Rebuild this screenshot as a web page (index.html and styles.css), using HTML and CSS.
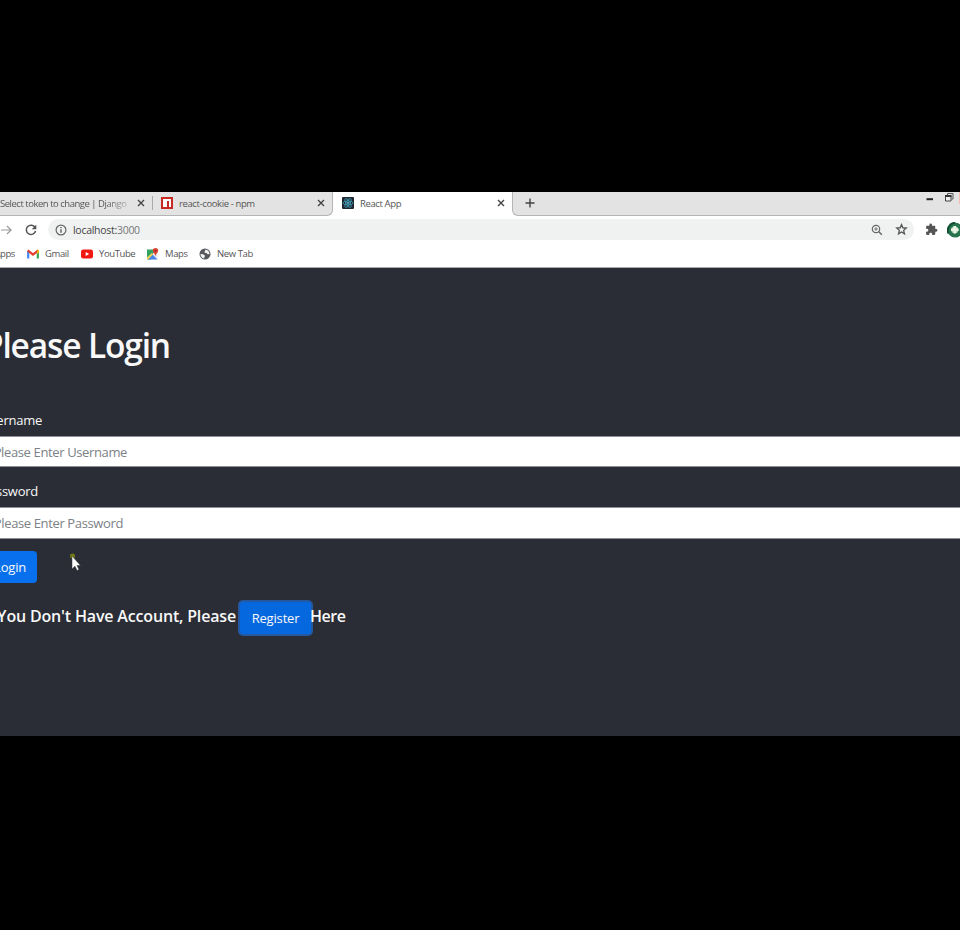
FILE: index.html
```html
<!DOCTYPE html>
<html lang="en">
<head>
<meta charset="utf-8">
<title>React App</title>
<link rel="stylesheet" href="styles.css">
</head>
<body>
<div class="browser">
  <div class="tabs">
    <div class="tab tab-django"><span class="title fade">Select token to change | Django</span><svg class="x" viewBox="0 0 8 8"><path d="M1 1l6 6M7 1L1 7"/></svg></div>
    <div class="tab tab-npm"><svg class="fav" viewBox="0 0 12 12"><path fill="#c62a22" d="M0 0h12v12H0z"/><path fill="#fff" d="M2 2h8v8H8V4H6v6H2z"/></svg><span class="title">react-cookie - npm</span><svg class="x" viewBox="0 0 8 8"><path d="M1 1l6 6M7 1L1 7"/></svg></div>
    <div class="tab tab-react"><svg class="fav" viewBox="0 0 12 12"><rect width="12" height="12" rx="1" fill="#20262d"/><g fill="none" stroke="#3f9db8" stroke-width=".8"><ellipse cx="6" cy="6" rx="5" ry="2"/><ellipse cx="6" cy="6" rx="5" ry="2" transform="rotate(60 6 6)"/><ellipse cx="6" cy="6" rx="5" ry="2" transform="rotate(120 6 6)"/></g><circle cx="6" cy="6" r="1" fill="#5cc4dc"/></svg><span class="title">React App</span><svg class="x" viewBox="0 0 8 8"><path d="M1 1l6 6M7 1L1 7"/></svg></div>
    <div class="tab-rest">
      <svg class="plus" viewBox="0 0 10 10"><path d="M5 .5v9M.5 5h9"/></svg>
      <svg class="window" viewBox="0 0 34 16"><path d="M.5 7.200h6.500" stroke="#222" stroke-width="2"/><path d="M21.500 3V1.500h5.500v5.500h-1.500" fill="none" stroke="#555"/><path d="M19.500 3.500h5.500v5.500h-5.500z" fill="#eee" stroke="#444"/><path d="M19 4h6.500" stroke="#333" stroke-width="2"/><path d="M33 0h1v12h-1z" fill="#f4bdb5"/></svg>
    </div>
  </div>
  <div class="toolbar">
    <svg class="forward" viewBox="0 0 14 12"><path d="M1 6h10M7 2l4 4-4 4"/></svg>
    <svg class="reload" viewBox="0 0 12 12"><path d="M10.100 3.500A4.700 4.700 0 1 0 10.600 7" fill="none" stroke="#555" stroke-width="1.500"/><path d="M11.300.7v4.600H6.700z" fill="#555"/></svg>
    <div class="address">
      <svg class="info" viewBox="0 0 12 12"><circle cx="6" cy="6" r="4.900" fill="none" stroke="#666" stroke-width="1.200"/><path d="M6 5.300v3.500M6 3v1.300" stroke="#555" stroke-width="1.300"/></svg>
      <span class="url">localhost:<span class="port">3000</span></span>
      <svg class="magnify" viewBox="0 0 12 12"><g fill="none" stroke="#666"><circle cx="5" cy="5" r="3.700" stroke-width="1.200"/><path d="M7.800 7.800l3 3" stroke-width="1.600"/><path d="M5 3.200v3.600M3.200 5h3.600" stroke-width=".9"/></g></svg>
      <svg class="star" viewBox="0 0 12 12"><path d="M6 1.500l1.250 2.900 3.150.3-2.400 2.100.75 3.200L6 8.350 3.250 10l.75-3.200-2.400-2.100 3.150-.3z" fill="none" stroke="#555" stroke-width="1.200"/></svg>
    </div>
    <svg class="puzzle" viewBox="0 0 24 24"><path fill="#555" d="M20.500 11H19V7c0-1.100-.9-2-2-2h-4V3.500a2.500 2.500 0 0 0-5 0V5H4c-1.100 0-2 .9-2 2v3.800h1.500a2.700 2.700 0 0 1 0 5.400H2V20c0 1.100.9 2 2 2h3.800v-1.500a2.700 2.700 0 0 1 5.400 0V22H17c1.100 0 2-.9 2-2v-4h1.500a2.500 2.500 0 0 0 0-5z"/></svg>
    <svg class="avatar" viewBox="0 0 16 16"><circle cx="8" cy="8" r="7.600" fill="#26734d"/><path d="M1.500 11.500A7.500 7.500 0 0 1 8 .8" stroke="#164e35" stroke-width="2" fill="none"/><circle cx="7.800" cy="7.800" r="3.500" fill="#b9d8b6"/><path d="M7.800 4v7.600M4 7.800h7.600" stroke="#edf5e8" stroke-width="2.500"/></svg>
  </div>
  <div class="bookmarks">
    <span class="apps">Apps</span>
    <svg class="gmail" viewBox="0 0 12 10"><path d="M1.200 9.500V2" stroke="#4285f4" stroke-width="2.200"/><path d="M10.800 9.500V2" stroke="#34a853" stroke-width="2.200"/><path d="M.7 1.300L6 5.600l5.300-4.300" fill="none" stroke="#e33b2e" stroke-width="2.200"/><path d="M10 1.800l1.900-1v2.800L10 5z" fill="#fbbc04"/></svg><span class="bm-gmail">Gmail</span>
    <svg class="youtube" viewBox="0 0 12 10"><rect y=".5" width="12" height="9" rx="2.300" fill="#f01811"/><path d="M4.700 3v4L8.200 5z" fill="#fff"/></svg><span class="bm-youtube">YouTube</span>
    <svg class="maps" viewBox="0 0 12 12"><path fill="#34a262" d="M0 1.500h9v5L4 11.500H0z"/><path fill="#e8eaed" d="M6 5l4.500-1v7.500H6z"/><path fill="#4a83e8" d="M5.500 6.500l5 5H1z"/><path fill="#f8d455" d="M0 9.500L5 5l1.200 1.200L1 11.500H0z"/><path fill="#dc4437" d="M8.500 0A2.700 2.700 0 0 1 11.200 2.700C11.200 4.500 9.200 5.300 8.500 8 7.800 5.300 5.800 4.500 5.800 2.700A2.700 2.700 0 0 1 8.500 0"/><circle cx="8.500" cy="2.700" r=".9" fill="#81251e"/></svg><span class="bm-maps">Maps</span>
    <svg class="globe" viewBox="0 0 12 12"><circle cx="6" cy="6" r="5.500" fill="#55595d"/><path fill="#f1f1f1" d="M1.500 6l2.700.3 1.800 1.500-1 2.700C3 10 1.500 8.500 1.500 6M6.500 1.500l2.700 1 1.500 3L9 6.500 7.500 5l-2-.3.3-1.400z"/></svg><span class="bm-new">New Tab</span>
  </div>
  <main class="page">
    <h1><span>Please Login</span></h1>
    <label class="user-label"><span>Username</span></label>
    <div class="field"><span class="ph-user">Please Enter Username</span></div>
    <label class="pass-label"><span>Password</span></label>
    <div class="field field-pass"><span class="ph-pass">Please Enter Password</span></div>
    <div class="login"><span>Login</span></div>
    <div class="signup"><p><span>If You Don't Have Account, Please</span></p><div class="register"><span>Register</span></div><span class="here">Here</span></div>
    <svg class="cursor" viewBox="0 0 12 20"><circle cx="2.500" cy="3" r="2.500" fill="#737c13"/><path d="M2 3v13l3-2.800 2 4.300 2-1-2-4h3.500z" fill="#fff" stroke="#333" stroke-width=".5"/></svg>
  </main>
</div>
</body>
</html>
```
FILE: styles.css
```css
* { box-sizing: border-box; }
body { margin: 0; background: #000; font-family: "Open Sans", "Noto Sans", sans-serif; overflow: hidden; }
svg { display: block; flex: none; }
span { white-space: nowrap; }
.browser { width: 960px; height: 930px; padding-top: 192px; overflow: hidden; }

.tabs { display: flex; height: 24px; background: #fff; font-size: 9.5px; letter-spacing: -.38px; color: #555; }
.tab { display: flex; align-items: center; height: 24px; padding-bottom: 1px; background: #e3e3e3; border-bottom: 1px solid #b5b5b5; position: relative; }
.tab .x { width: 8px; height: 8px; margin-left: auto; }
.x path, .plus path { fill: none; stroke: #444; stroke-width: 1.4; }
.fav { width: 12px; height: 12px; }
.tab-django { width: 153px; padding-right: 8px; letter-spacing: -.48px; }
.tab-django::after { content: ""; width: 1px; height: 14px; background: #aaa; position: absolute; right: 0; top: 4px; }
.fade { mask-image: linear-gradient(90deg, #000 105px, transparent 138px); }
.tab-npm { width: 180px; padding: 0 7px 1px 8px; border-right: 1px solid #b5b5b5; border-bottom-right-radius: 6px; }
.tab-npm .title { margin-left: 6px; }
.tab-react { width: 179px; padding: 0 7px 2px 9px; background: #fff; border: 0; }
.tab-react .title { margin-left: 6px; }
.tab-rest { flex: 1; display: flex; align-items: center; padding: 0 0 1px 12px; background: #e3e3e3; border: solid #b5b5b5; border-width: 0 0 1px 1px; border-bottom-left-radius: 6px; }
.plus { width: 10px; height: 10px; }
.window { width: 34px; height: 16px; margin-left: auto; align-self: flex-start; }

.toolbar { display: flex; align-items: center; height: 27px; background: #fff; }
.forward { width: 14px; height: 12px; fill: none; stroke: #999; stroke-width: 1.2; }
.reload { width: 12px; height: 12px; margin-left: 11px; }
.address { display: flex; flex: none; align-items: center; width: 866px; height: 21px; margin-left: 11px; padding: 0 6px 0 7px; border-radius: 11px; background: #f0f2f2; }
.info { width: 12px; height: 12px; }
.url { margin-left: 6px; font-size: 10.5px; letter-spacing: -.28px; color: #444; }
.port { color: #777; }
.magnify { width: 12px; height: 12px; margin-left: auto; }
.star { width: 13px; height: 13px; margin-left: 12px; }
.puzzle { width: 13px; height: 13px; margin-left: 11px; }
.avatar { width: 16px; height: 16px; margin-left: 9px; }

.bookmarks { display: flex; align-items: center; height: 25px; padding-bottom: 3px; background: #fff; border-bottom: 1px solid #aaa; font-size: 9.5px; letter-spacing: -.4px; color: #555; }
.apps { display: flex; justify-content: flex-end; width: 15px; }
.gmail { width: 12px; height: 10px; margin-left: 12px; }
.bm-gmail { width: 36px; margin-left: 6px; }
.youtube { width: 12px; height: 10px; }
.bm-youtube { width: 48px; margin-left: 6px; }
.maps { width: 12px; height: 12px; }
.bm-maps { width: 34px; margin-left: 6px; }
.globe { width: 12px; height: 12px; }
.bm-new { margin-left: 6px; }

.page { position: relative; height: 468px; background: #2a2d35; color: #f8f8f8; overflow: hidden; }
h1 { display: flex; justify-content: flex-end; width: 170px; height: 54px; margin: 50px 0 0; line-height: 54px; font-size: 33.5px; letter-spacing: -1.15px; font-weight: 600; }
label { display: flex; justify-content: flex-end; height: 24px; line-height: 24px; font-size: 13px; letter-spacing: -.25px; }
.user-label { width: 42px; margin-top: 36px; }
.pass-label { width: 38px; margin-top: 12px; }
.field { height: 31px; margin-top: 4px; background: #fff; border: solid #8d9197; border-width: 1px 0; color: #7b8186; font-size: 13px; letter-spacing: -.37px; line-height: 31px; }
.field span { display: flex; justify-content: flex-end; }
.field-pass { height: 32px; }
.ph-user { width: 127px; }
.ph-pass { width: 123px; }
.login { display: flex; justify-content: flex-end; width: 37px; height: 32px; margin-top: 12px; padding-right: 11px; border-radius: 0 4px 4px 0; background: #0870ed; font-size: 13px; letter-spacing: -.2px; line-height: 32px; }
.signup { display: flex; height: 36px; margin-top: 17px; line-height: 32px; font-size: 16px; letter-spacing: -.17px; font-weight: 600; }
.signup p { display: flex; justify-content: flex-end; width: 236px; margin: 0; }
.register { width: 75px; height: 36px; margin-left: 2px; border: 2px solid #2458a0; border-radius: 5px; background: #0668df; text-align: center; font-size: 13px; font-weight: 400; }
.here { margin-left: -3px; letter-spacing: -.5px; }
.cursor { position: absolute; left: 70px; top: 285px; width: 12px; height: 20px; }
```
